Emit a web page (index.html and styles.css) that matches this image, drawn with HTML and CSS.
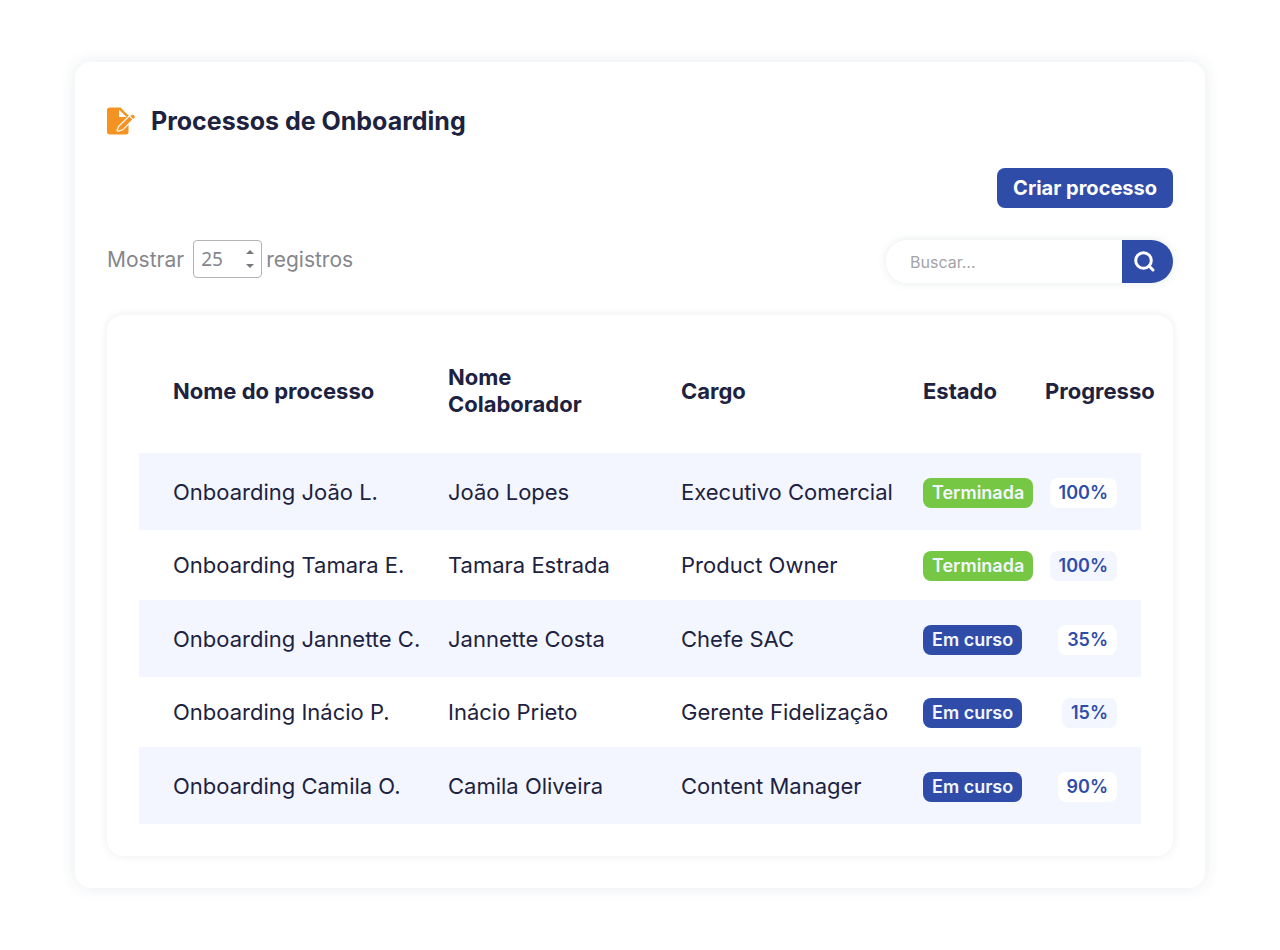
FILE: index.html
```
<!DOCTYPE html>
<html lang="pt">
<head>
<meta charset="utf-8">
<meta name="viewport" content="width=device-width, initial-scale=1">
<title>Processos de Onboarding</title>
<link rel="stylesheet" href="styles.css">
</head>
<body>
<main class="panel">
	<header class="panel-title">
		<svg class="icon-edit" viewBox="0 0 28 28" aria-hidden="true">
			<path fill="#f59322" d="M3 0.500H13.500L21.500 8.500V25Q21.500 27.500 19 27.500H3Q0 27.500 0 25V3Q0 0.500 3 0.500Z"/>
			<path fill="#fff" d="M12 2.800L19.600 10H12Z"/>
			<path fill="#f59322" stroke="#fff" stroke-width="3" stroke-linejoin="round" d="M22.400 10.200L24.800 12.600L15.500 21.800L11 23.200L12.600 19.600Z"/>
			<path fill="#f59322" d="M22.400 9.800L25.200 12.600L15.500 22.300L10.500 23.800L12.300 19.600Z"/>
			<path fill="#f59322" d="M23.300 9L24.300 8.200Q25.500 7.200 26.800 8.300Q28.500 9.800 27 11.300L26.100 12Z"/>
		</svg>
		<h1>Processos de Onboarding</h1>
	</header>

	<div class="actions">
		<button type="button" class="btn-create">Criar processo</button>
	</div>

	<div class="toolbar">
		<div class="length">
			<label for="length">Mostrar</label>
			<span class="select-box">
				<select id="length">
					<option>10</option>
					<option selected>25</option>
					<option>50</option>
				</select>
				<svg viewBox="0 0 8 20" aria-hidden="true"><path fill="#77787e" d="M0 5L4 1L8 5ZM0 15L4 19L8 15Z"/></svg>
			</span>
			<span>registros</span>
		</div>
		<form class="search">
			<input type="search" placeholder="Buscar..." aria-label="Buscar">
			<button type="button" aria-label="Buscar">
				<svg viewBox="0 0 22 22" aria-hidden="true"><circle cx="9.500" cy="9.500" r="7.800"/><path d="M15 15L19 19"/></svg>
			</button>
		</form>
	</div>

	<section class="table-card">
		<table>
			<colgroup>
				<col class="c-process"><col class="c-name"><col class="c-role"><col class="c-state"><col class="c-progress">
			</colgroup>
			<thead>
				<tr>
					<th>Nome do processo</th>
					<th>Nome<br>Colaborador</th>
					<th>Cargo</th>
					<th>Estado</th>
					<th>Progresso</th>
				</tr>
			</thead>
			<tbody>
				<tr>
					<td>Onboarding João L.</td>
					<td>João Lopes</td>
					<td>Executivo Comercial</td>
					<td><span class="badge done">Terminada</span></td>
					<td><span class="percent">100%</span></td>
				</tr>
				<tr>
					<td>Onboarding Tamara E.</td>
					<td>Tamara Estrada</td>
					<td>Product Owner</td>
					<td><span class="badge done">Terminada</span></td>
					<td><span class="percent">100%</span></td>
				</tr>
				<tr>
					<td>Onboarding Jannette C.</td>
					<td>Jannette Costa</td>
					<td>Chefe SAC</td>
					<td><span class="badge">Em curso</span></td>
					<td><span class="percent">35%</span></td>
				</tr>
				<tr>
					<td>Onboarding Inácio P.</td>
					<td>Inácio Prieto</td>
					<td>Gerente Fidelização</td>
					<td><span class="badge">Em curso</span></td>
					<td><span class="percent">15%</span></td>
				</tr>
				<tr>
					<td>Onboarding Camila O.</td>
					<td>Camila Oliveira</td>
					<td>Content Manager</td>
					<td><span class="badge">Em curso</span></td>
					<td><span class="percent">90%</span></td>
				</tr>
			</tbody>
		</table>
	</section>
</main>
</body>
</html>
```
FILE: styles.css
```
*{box-sizing:border-box;}
body{margin:0;padding:62px 75px;background:#fff;color:#1d2240;font-family:Inter, "Liberation Sans", sans-serif;}
button, input, select{font-family:inherit;border:0;margin:0;}

.panel{padding:42px 32px 32px;border-radius:16px;background:#fff;box-shadow:0 0 16px rgba(30, 60, 100, 0.1);}
.panel-title{display:flex;align-items:center;gap:16px;height:34px;}
.panel-title h1{margin:0;font-size:25px;line-height:34px;font-weight:700;}
.icon-edit{width:28px;height:28px;}

.actions{display:flex;justify-content:flex-end;margin-top:30px;}
.btn-create{height:40px;padding:0 16px;border-radius:8px;background:#2f4da8;color:#fff;font-size:20px;font-weight:700;cursor:pointer;}

/* length + search */
.toolbar{display:flex;justify-content:space-between;align-items:flex-start;margin-top:32px;}
.length{display:flex;align-items:center;color:#85868c;font-size:21px;}
.select-box{position:relative;margin:0 4px 0 9px;}
.select-box select{display:block;width:69px;height:38px;padding:0 7px;border:1px solid #b4b4b6;border-radius:4px;background:#fff;color:#85868c;font-family:"Noto Sans", sans-serif;font-size:19px;appearance:none;}
.select-box svg{position:absolute;right:8px;top:9px;width:8px;height:20px;pointer-events:none;}
.search{display:flex;width:287px;height:43px;border-radius:22px;overflow:hidden;box-shadow:0 0 10px rgba(40, 70, 90, 0.12);}
.search input{flex:1;min-width:0;padding:0 24px;background:#fff;color:#1d2240;font-size:16px;outline:0;}
.search input::placeholder{color:#a3a3a8;}
.search button{display:flex;align-items:center;width:51px;padding:0 12px;background:#2f4da8;cursor:pointer;}
.search svg{width:22px;height:22px;fill:none;stroke:#fff;stroke-width:3;stroke-linecap:round;}

/* table */
.table-card{margin-top:32px;padding:14px 32px 32px;border-radius:16px;box-shadow:0 0 10px rgba(0, 0, 0, 0.08);}
table{width:100%;table-layout:fixed;border-collapse:collapse;}
.c-process{width:309px;}
.c-name{width:233px;}
.c-role{width:242px;}
.c-state{width:122px;}
.c-progress{width:96px;}
th, td{padding:0;text-align:left;white-space:nowrap;}
th{height:124px;font-size:22px;line-height:27px;font-weight:700;}
td{height:70px;font-size:22px;line-height:30px;}
th:first-child, td:first-child{padding-left:34px;}
td:last-child{padding-right:24px;text-align:right;}
tbody tr:nth-child(odd) td{height:77px;background:#f3f6ff;}
.badge, .percent{display:inline-block;height:30px;border-radius:8px;font-size:18px;line-height:30px;font-weight:600;vertical-align:middle;}
.badge{padding:0 9px;background:#2f4da8;color:#f3f6ff;}
.badge.done{background:#76c743;}
.percent{padding:0 9px;background:#f3f6ff;color:#2f4da8;}
tbody tr:nth-child(odd) .percent{background:#fff;}
```
